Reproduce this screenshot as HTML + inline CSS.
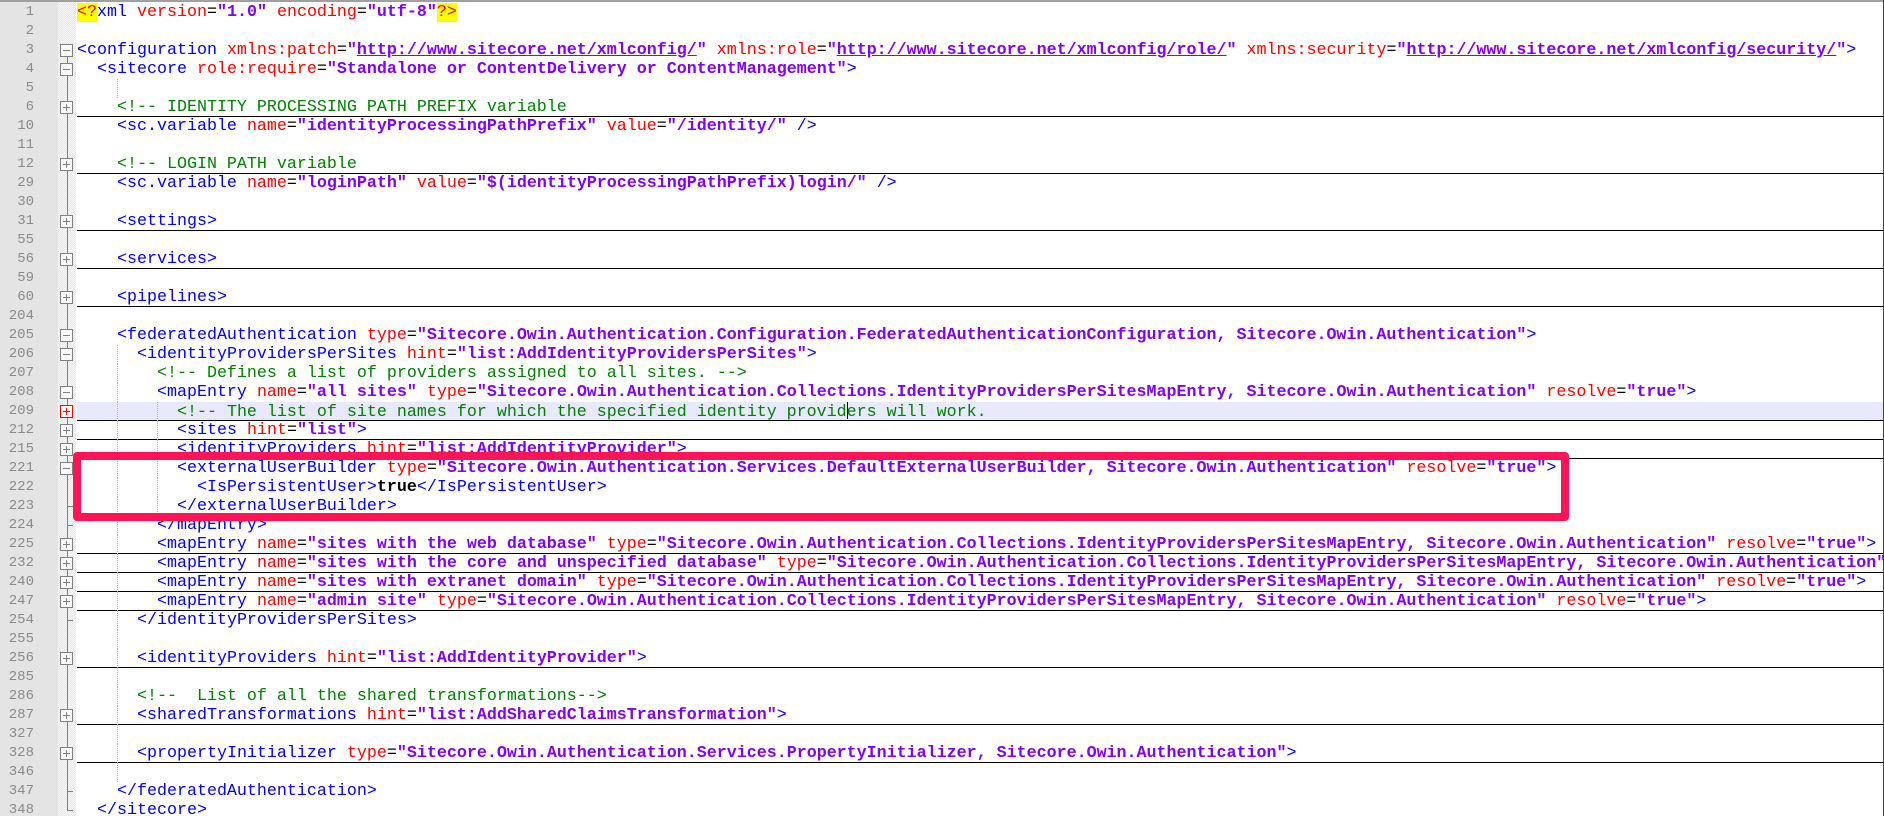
<!DOCTYPE html>
<html><head><meta charset="utf-8"><style>
html,body{margin:0;padding:0;}
body{width:1884px;height:816px;overflow:hidden;background:#fff;position:relative;font-family:"Liberation Mono",monospace;}
#top{position:absolute;left:0;top:0;width:1884px;height:2px;background:#a0a0a0;}
#rgt{position:absolute;right:0;top:0;width:1px;height:816px;background:#404040;}
#gn{position:absolute;left:0;top:0;width:58px;height:816px;background:#e4e4e4;}
#gf{position:absolute;left:58px;top:0;width:18px;height:816px;background-color:#f4f4f4;background-image:repeating-conic-gradient(#e6e6e6 0 25%,#f8f8f8 0 50%);background-size:2px 2px;}
#vl{position:absolute;left:67px;top:57px;width:1px;height:753px;background:#808080;}
#lines{position:absolute;left:0;top:3px;width:1884px;}
.l{display:flex;height:19px;position:relative;}
.n{flex:0 0 34px;width:34px;padding-right:24px;text-align:right;color:#8a8a8a;font-size:14px;line-height:19px;}
.f{flex:0 0 19px;width:19px;position:relative;}
.c{flex:1 1 auto;min-width:0;margin:0;padding-left:0;white-space:pre;font-size:16.67px;line-height:19px;color:#000;position:relative;box-sizing:border-box;height:19px;overflow:visible;}
.u{border-bottom:1px solid #000;}
.hl{background:#e8e8ff;}
.t{color:#0000ff}.a{color:#ff0000}.v{color:#8000ff;font-weight:bold}.c2{color:#008000}.k{font-weight:bold}
.url{text-decoration:underline}
.y{background:#ffff00;color:#ff0000}
.bx{position:absolute;left:2px;top:3px;width:13px;height:13px;box-sizing:border-box;border:1px solid #808080;background:#fafafa;}
.bx:before{content:"";position:absolute;left:2px;top:5px;width:7px;height:1px;background:#808080;}
.bx.p:after{content:"";position:absolute;left:5px;top:2px;width:1px;height:7px;background:#808080;}
.bx.r{border-color:#ff0000;}
.bx.r:before,.bx.r:after{background:#ff0000;}
.tk{position:absolute;left:9px;top:9px;width:6px;height:1px;background:#808080;}
.g{position:absolute;top:0;height:19px;border-left:1px dotted #b0b0b0;}
#rb{position:absolute;left:73px;top:452px;width:1496px;height:69px;box-sizing:border-box;border:8px solid #ff1458;border-radius:4px;}
.caret{display:inline-block;width:1px;height:17px;background:#000;vertical-align:-3px;margin-right:-1px;}
</style></head><body>
<div id="gn"></div><div id="gf"></div><div id="vl"></div>
<div id="lines">
<div class="l"><span class="n">1</span><span class="f"></span><pre class="c"><span class="y">&lt;?</span><span class="t">xml</span> <span class="a">version</span>=<span class="v">"1.0"</span> <span class="a">encoding</span>=<span class="v">"utf-8"</span><span class="y">?&gt;</span></pre></div>
<div class="l"><span class="n">2</span><span class="f"></span><pre class="c"></pre></div>
<div class="l"><span class="n">3</span><span class="f"><i class="bx"></i></span><pre class="c"><span class="t">&lt;configuration</span> <span class="a">xmlns:patch</span>=<span class="v">"<span class="url">http://www.sitecore.net/xmlconfig/</span>"</span> <span class="a">xmlns:role</span>=<span class="v">"<span class="url">http://www.sitecore.net/xmlconfig/role/</span>"</span> <span class="a">xmlns:security</span>=<span class="v">"<span class="url">http://www.sitecore.net/xmlconfig/security/</span>"</span><span class="t">&gt;</span></pre></div>
<div class="l"><span class="n">4</span><span class="f"><i class="bx"></i></span><pre class="c">  <span class="t">&lt;sitecore</span> <span class="a">role:require</span>=<span class="v">"Standalone or ContentDelivery or ContentManagement"</span><span class="t">&gt;</span></pre></div>
<div class="l"><span class="n">5</span><span class="f"></span><pre class="c"><i class="g" style="left:40px"></i></pre></div>
<div class="l"><span class="n">6</span><span class="f"><i class="bx p"></i></span><pre class="c u">    <span class="c2">&lt;!-- IDENTITY PROCESSING PATH PREFIX variable</span></pre></div>
<div class="l"><span class="n">10</span><span class="f"></span><pre class="c">    <span class="t">&lt;sc.variable</span> <span class="a">name</span>=<span class="v">"identityProcessingPathPrefix"</span> <span class="a">value</span>=<span class="v">"/identity/"</span> <span class="t">/&gt;</span></pre></div>
<div class="l"><span class="n">11</span><span class="f"></span><pre class="c"></pre></div>
<div class="l"><span class="n">12</span><span class="f"><i class="bx p"></i></span><pre class="c u">    <span class="c2">&lt;!-- LOGIN PATH variable</span></pre></div>
<div class="l"><span class="n">29</span><span class="f"></span><pre class="c">    <span class="t">&lt;sc.variable</span> <span class="a">name</span>=<span class="v">"loginPath"</span> <span class="a">value</span>=<span class="v">"$(identityProcessingPathPrefix)login/"</span> <span class="t">/&gt;</span></pre></div>
<div class="l"><span class="n">30</span><span class="f"></span><pre class="c"></pre></div>
<div class="l"><span class="n">31</span><span class="f"><i class="bx p"></i></span><pre class="c u">    <span class="t">&lt;settings&gt;</span></pre></div>
<div class="l"><span class="n">55</span><span class="f"></span><pre class="c"></pre></div>
<div class="l"><span class="n">56</span><span class="f"><i class="bx p"></i></span><pre class="c u">    <span class="t">&lt;services&gt;</span></pre></div>
<div class="l"><span class="n">59</span><span class="f"></span><pre class="c"></pre></div>
<div class="l"><span class="n">60</span><span class="f"><i class="bx p"></i></span><pre class="c u">    <span class="t">&lt;pipelines&gt;</span></pre></div>
<div class="l"><span class="n">204</span><span class="f"></span><pre class="c"></pre></div>
<div class="l"><span class="n">205</span><span class="f"><i class="bx"></i></span><pre class="c">    <span class="t">&lt;federatedAuthentication</span> <span class="a">type</span>=<span class="v">"Sitecore.Owin.Authentication.Configuration.FederatedAuthenticationConfiguration, Sitecore.Owin.Authentication"</span><span class="t">&gt;</span></pre></div>
<div class="l"><span class="n">206</span><span class="f"><i class="bx"></i></span><pre class="c"><i class="g" style="left:40px"></i>      <span class="t">&lt;identityProvidersPerSites</span> <span class="a">hint</span>=<span class="v">"list:AddIdentityProvidersPerSites"</span><span class="t">&gt;</span></pre></div>
<div class="l"><span class="n">207</span><span class="f"></span><pre class="c"><i class="g" style="left:40px"></i>        <span class="c2">&lt;!-- Defines a list of providers assigned to all sites. --&gt;</span></pre></div>
<div class="l"><span class="n">208</span><span class="f"><i class="bx"></i></span><pre class="c"><i class="g" style="left:40px"></i>        <span class="t">&lt;mapEntry</span> <span class="a">name</span>=<span class="v">"all sites"</span> <span class="a">type</span>=<span class="v">"Sitecore.Owin.Authentication.Collections.IdentityProvidersPerSitesMapEntry, Sitecore.Owin.Authentication"</span> <span class="a">resolve</span>=<span class="v">"true"</span><span class="t">&gt;</span></pre></div>
<div class="l"><span class="n">209</span><span class="f"><i class="bx p r"></i></span><pre class="c u hl"><i class="g" style="left:40px"></i><i class="g" style="left:80px"></i>          <span class="c2">&lt;!-- The list of site names for which the specified identity provid<span class="caret"></span>ers will work.</span></pre></div>
<div class="l"><span class="n">212</span><span class="f"><i class="bx p"></i></span><pre class="c u"><i class="g" style="left:40px"></i><i class="g" style="left:80px"></i>          <span class="t">&lt;sites</span> <span class="a">hint</span>=<span class="v">"list"</span><span class="t">&gt;</span></pre></div>
<div class="l"><span class="n">215</span><span class="f"><i class="bx p"></i></span><pre class="c u"><i class="g" style="left:40px"></i><i class="g" style="left:80px"></i>          <span class="t">&lt;identityProviders</span> <span class="a">hint</span>=<span class="v">"list:AddIdentityProvider"</span><span class="t">&gt;</span></pre></div>
<div class="l"><span class="n">221</span><span class="f"><i class="bx"></i></span><pre class="c"><i class="g" style="left:40px"></i><i class="g" style="left:80px"></i>          <span class="t">&lt;externalUserBuilder</span> <span class="a">type</span>=<span class="v">"Sitecore.Owin.Authentication.Services.DefaultExternalUserBuilder, Sitecore.Owin.Authentication"</span> <span class="a">resolve</span>=<span class="v">"true"</span><span class="t">&gt;</span></pre></div>
<div class="l"><span class="n">222</span><span class="f"></span><pre class="c"><i class="g" style="left:40px"></i><i class="g" style="left:80px"></i>            <span class="t">&lt;IsPersistentUser&gt;</span><span class="k">true</span><span class="t">&lt;/IsPersistentUser&gt;</span></pre></div>
<div class="l"><span class="n">223</span><span class="f"><i class="tk"></i></span><pre class="c"><i class="g" style="left:40px"></i><i class="g" style="left:80px"></i>          <span class="t">&lt;/externalUserBuilder&gt;</span></pre></div>
<div class="l"><span class="n">224</span><span class="f"><i class="tk"></i></span><pre class="c"><i class="g" style="left:40px"></i>        <span class="t">&lt;/mapEntry&gt;</span></pre></div>
<div class="l"><span class="n">225</span><span class="f"><i class="bx p"></i></span><pre class="c u"><i class="g" style="left:40px"></i>        <span class="t">&lt;mapEntry</span> <span class="a">name</span>=<span class="v">"sites with the web database"</span> <span class="a">type</span>=<span class="v">"Sitecore.Owin.Authentication.Collections.IdentityProvidersPerSitesMapEntry, Sitecore.Owin.Authentication"</span> <span class="a">resolve</span>=<span class="v">"true"</span><span class="t">&gt;</span></pre></div>
<div class="l"><span class="n">232</span><span class="f"><i class="bx p"></i></span><pre class="c u"><i class="g" style="left:40px"></i>        <span class="t">&lt;mapEntry</span> <span class="a">name</span>=<span class="v">"sites with the core and unspecified database"</span> <span class="a">type</span>=<span class="v">"Sitecore.Owin.Authentication.Collections.IdentityProvidersPerSitesMapEntry, Sitecore.Owin.Authentication"</span></pre></div>
<div class="l"><span class="n">240</span><span class="f"><i class="bx p"></i></span><pre class="c u"><i class="g" style="left:40px"></i>        <span class="t">&lt;mapEntry</span> <span class="a">name</span>=<span class="v">"sites with extranet domain"</span> <span class="a">type</span>=<span class="v">"Sitecore.Owin.Authentication.Collections.IdentityProvidersPerSitesMapEntry, Sitecore.Owin.Authentication"</span> <span class="a">resolve</span>=<span class="v">"true"</span><span class="t">&gt;</span></pre></div>
<div class="l"><span class="n">247</span><span class="f"><i class="bx p"></i></span><pre class="c u"><i class="g" style="left:40px"></i>        <span class="t">&lt;mapEntry</span> <span class="a">name</span>=<span class="v">"admin site"</span> <span class="a">type</span>=<span class="v">"Sitecore.Owin.Authentication.Collections.IdentityProvidersPerSitesMapEntry, Sitecore.Owin.Authentication"</span> <span class="a">resolve</span>=<span class="v">"true"</span><span class="t">&gt;</span></pre></div>
<div class="l"><span class="n">254</span><span class="f"><i class="tk"></i></span><pre class="c"><i class="g" style="left:40px"></i>      <span class="t">&lt;/identityProvidersPerSites&gt;</span></pre></div>
<div class="l"><span class="n">255</span><span class="f"></span><pre class="c"><i class="g" style="left:40px"></i></pre></div>
<div class="l"><span class="n">256</span><span class="f"><i class="bx p"></i></span><pre class="c u"><i class="g" style="left:40px"></i>      <span class="t">&lt;identityProviders</span> <span class="a">hint</span>=<span class="v">"list:AddIdentityProvider"</span><span class="t">&gt;</span></pre></div>
<div class="l"><span class="n">285</span><span class="f"></span><pre class="c"><i class="g" style="left:40px"></i></pre></div>
<div class="l"><span class="n">286</span><span class="f"></span><pre class="c"><i class="g" style="left:40px"></i>      <span class="c2">&lt;!--  List of all the shared transformations--&gt;</span></pre></div>
<div class="l"><span class="n">287</span><span class="f"><i class="bx p"></i></span><pre class="c u"><i class="g" style="left:40px"></i>      <span class="t">&lt;sharedTransformations</span> <span class="a">hint</span>=<span class="v">"list:AddSharedClaimsTransformation"</span><span class="t">&gt;</span></pre></div>
<div class="l"><span class="n">327</span><span class="f"></span><pre class="c"><i class="g" style="left:40px"></i></pre></div>
<div class="l"><span class="n">328</span><span class="f"><i class="bx p"></i></span><pre class="c u"><i class="g" style="left:40px"></i>      <span class="t">&lt;propertyInitializer</span> <span class="a">type</span>=<span class="v">"Sitecore.Owin.Authentication.Services.PropertyInitializer, Sitecore.Owin.Authentication"</span><span class="t">&gt;</span></pre></div>
<div class="l"><span class="n">346</span><span class="f"></span><pre class="c"><i class="g" style="left:40px"></i></pre></div>
<div class="l"><span class="n">347</span><span class="f"><i class="tk"></i></span><pre class="c">    <span class="t">&lt;/federatedAuthentication&gt;</span></pre></div>
<div class="l"><span class="n">348</span><span class="f"><i class="tk"></i></span><pre class="c">  <span class="t">&lt;/sitecore&gt;</span></pre></div>
</div>
<div id="rb"></div>
<div id="top"></div><div id="rgt"></div>
</body></html>
